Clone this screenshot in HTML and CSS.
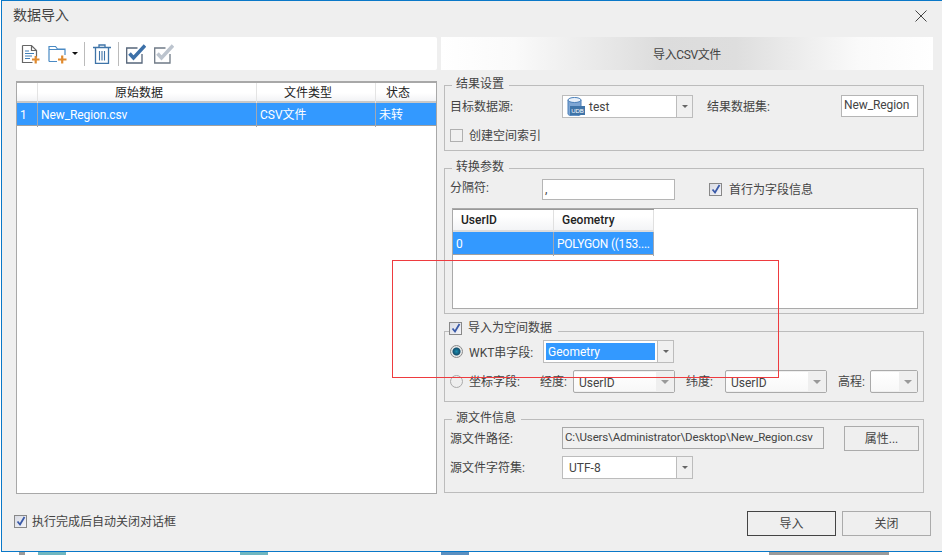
FILE: index.html
```html
<!DOCTYPE html>
<html lang="zh-CN">
<head>
<meta charset="utf-8">
<title>数据导入</title>
<link rel="stylesheet" href="styles.css">
</head>
<body>
<div class="dialog">
  <div class="titlebar">
    <span class="title">数据导入</span>
    <svg class="close" width="12" height="12" viewBox="0 0 12 12"><path d="M.5.5l11 11M11.500.5l-11 11" stroke="#444" stroke-width="1" fill="none"/></svg>
  </div>
  <div class="main">
    <div class="left">
      <div class="toolbar">
        <svg class="tool t-doc" width="19" height="20" viewBox="0 0 19 20"><path d="M1.500 1.500h9l5 5v7M15.500 6.500h-5v-5M1.500 1.500v17h10" fill="none" stroke="#666" stroke-width="1.200"/><path d="M4 7h4M4 9.500h9M4 12h7M4 14.500h5" stroke="#3f7fb8" stroke-width="1"/><path d="M11 15.500h7.500M14.700 12v7.500" stroke="#e08a2e" stroke-width="2.200"/></svg>
        <svg class="tool t-folder" width="20" height="20" viewBox="0 0 20 20"><path d="M1 17.500V2.500h6.500l2 2.500h7.500v6M1 5.500h16M1 17.500h8" fill="none" stroke="#4a8ac4" stroke-width="1.200"/><path d="M10 15.500h8.500M14.200 11.500v8" stroke="#e08a2e" stroke-width="2.200"/></svg>
        <span class="tool-arrow"></span>
        <span class="tool-sep"></span>
        <svg class="tool t-trash" width="18" height="20" viewBox="0 0 18 20"><path d="M0 3.500h18M6 3V1h6v2" fill="none" stroke="#3f74a8" stroke-width="1.300"/><path d="M2.500 4v15.300h13V4" fill="none" stroke="#3f74a8" stroke-width="1.300"/><path d="M6.500 7v9.500M9 7v9.500M11.500 7v9.500" stroke="#3f74a8" stroke-width="1.100"/></svg>
        <span class="tool-sep sep-2"></span>
        <svg class="tool t-check" width="20" height="20" viewBox="0 0 20 20"><path d="M16 10v9H.7V4h10.800" fill="none" stroke="#55657a" stroke-width="1.300"/><path d="M3.500 9.500l4 4.500L19 1.500" fill="none" stroke="#3c70a8" stroke-width="3.500"/></svg>
        <svg class="tool t-uncheck" width="20" height="20" viewBox="0 0 20 20"><path d="M16 10v9H.7V4h10.800" fill="none" stroke="#6f7a86" stroke-width="1.300"/><path d="M3.500 9.500l4 4.500L19 1.500" fill="none" stroke="#bcc4ce" stroke-width="3.500"/></svg>
      </div>
      <div class="file-table">
        <div class="ft-row ft-head">
          <div class="ft-cell"></div>
          <div class="ft-cell">原始数据</div>
          <div class="ft-cell">文件类型</div>
          <div class="ft-cell">状态</div>
        </div>
        <div class="ft-row ft-sel">
          <div class="ft-cell">1</div>
          <div class="ft-cell ft-name">New_Region.csv</div>
          <div class="ft-cell">CSV文件</div>
          <div class="ft-cell">未转</div>
        </div>
      </div>
    </div>
    <div class="right">
      <div class="panel-head">导入CSV文件</div>

      <div class="group g-result">
        <div class="legend">结果设置</div>
        <div class="row r-result-1">
          <span class="lbl w-112">目标数据源:</span>
          <div class="combo w-131">
            <div class="combo-val">
              <svg class="db" width="18" height="19" viewBox="0 0 18 19"><path d="M1 3v14c0 1 3 2 6.500 2s6.500-1 6.500-2V3" fill="#7ea6d4" stroke="#4a7fb8"/><ellipse cx="7.500" cy="3" rx="6.500" ry="2.500" fill="#e8f0fa" stroke="#4a7fb8"/><rect x="3" y="9" width="15" height="9" fill="#3f74a8"/><text x="10.500" y="16" font-size="6" font-family="Liberation Sans, sans-serif" fill="#fff" text-anchor="middle">UDB</text></svg>
              <span>test</span>
            </div>
            <span class="combo-btn"><i></i></span>
          </div>
          <span class="lbl w-134">结果数据集:</span>
          <div class="input w-77 in-result">New_Region</div>
        </div>
        <div class="row r-result-2">
          <span class="check"></span>
          <span class="lbl">创建空间索引</span>
        </div>
      </div>

      <div class="group g-convert">
        <div class="legend">转换参数</div>
        <div class="row r-conv-1">
          <span class="lbl w-92 lbl-up">分隔符:</span>
          <div class="input w-133 in-sep">,</div>
          <span class="check on"><svg width="12" height="12" viewBox="0 0 12 12"><path d="M2.500 6.500l2.500 3L9.500 2" fill="none" stroke="#3a5aa8" stroke-width="1.800"/></svg></span>
          <span class="lbl">首行为字段信息</span>
        </div>
        <div class="preview">
          <div class="pv-table">
            <div class="pv-row pv-head"><div class="pv-cell">UserID</div><div class="pv-cell">Geometry</div></div>
            <div class="pv-row pv-sel"><div class="pv-cell">0</div><div class="pv-cell">POLYGON ((153....</div></div>
          </div>
        </div>
      </div>

      <div class="group g-spatial">
        <div class="legend legend-check">
          <span class="check on"><svg width="12" height="12" viewBox="0 0 12 12"><path d="M2.500 6.500l2.500 3L9.500 2" fill="none" stroke="#3a5aa8" stroke-width="1.800"/></svg></span>
          <span>导入为空间数据</span>
        </div>
        <div class="row r-sp-1">
          <span class="radio on"></span>
          <span class="lbl w-74">WKT串字段:</span>
          <div class="combo w-131 combo-sel">
            <div class="combo-val"><span class="selected">Geometry</span></div>
            <span class="combo-btn"><i></i></span>
          </div>
        </div>
        <div class="row r-sp-2">
          <span class="radio"></span>
          <span class="lbl w-71">坐标字段:</span>
          <span class="lbl w-33">经度:</span>
          <div class="combo w-102 combo-off"><div class="combo-val"><span>UserID</span></div><span class="combo-btn"><i></i></span></div>
          <span class="lbl w-39">纬度:</span>
          <div class="combo w-102 combo-off"><div class="combo-val"><span>UserID</span></div><span class="combo-btn"><i></i></span></div>
          <span class="lbl w-32">高程:</span>
          <div class="combo w-48 combo-off"><div class="combo-val"></div><span class="combo-btn"><i></i></span></div>
        </div>
      </div>

      <div class="group g-source">
        <div class="legend">源文件信息</div>
        <div class="row r-src-1">
          <span class="lbl w-112">源文件路径:</span>
          <div class="input w-262 in-path">C:\Users\Administrator\Desktop\New_Region.csv</div>
          <div class="btn btn-prop">属性...</div>
        </div>
        <div class="row r-src-2">
          <span class="lbl w-112">源文件字符集:</span>
          <div class="combo w-131">
            <div class="combo-val pad-6"><span>UTF-8</span></div>
            <span class="combo-btn"><i></i></span>
          </div>
        </div>
      </div>
    </div>
  </div>
  <div class="footer">
    <div class="auto-close">
      <span class="check on"><svg width="12" height="12" viewBox="0 0 12 12"><path d="M2.500 6.500l2.500 3L9.500 2" fill="none" stroke="#3a5aa8" stroke-width="1.800"/></svg></span>
      <span class="lbl">执行完成后自动关闭对话框</span>
    </div>
    <div class="actions">
      <div class="btn btn-main">导入</div>
      <div class="btn btn-close">关闭</div>
    </div>
  </div>
</div>
<div class="desktop">
  <span class="d-mark d1"></span>
  <span class="d-teal d2"></span>
  <span class="d-teal d3"></span>
  <span class="d-blue d4"></span>
  <span class="d-mark d5"></span>
</div>
<div class="annotation"></div>
</body>
</html>
```
FILE: styles.css
```css
* { box-sizing: border-box; }
html, body { margin: 0; padding: 0; }
body {
  position: relative;
  width: 942px;
  height: 555px;
  overflow: hidden;
  background: #fff;
  font-family: Roboto, "Noto Sans CJK SC", sans-serif;
  font-size: 12px;
  color: #444;
}
.dialog {
  width: 941px;
  height: 552px;
  margin-left: 1px;
  background: #efefef;
  border-top: 1px solid #0a78c8;
  border-left: 1px solid #0a78c8;
  border-bottom: 1px solid #0a78c8;
  display: flex;
  flex-direction: column;
}
.titlebar {
  height: 36px;
  flex: none;
  display: flex;
  justify-content: space-between;
  align-items: flex-start;
  padding: 4px 15px 0 11px;
}
.title { font-size: 14px; line-height: 20px; color: #444; }
.close { margin-top: 5px; }
.main {
  display: flex;
  height: 456px;
  flex: none;
  padding-left: 14px;
  gap: 4px;
}
.left { width: 421px; flex: none; display: flex; flex-direction: column; }
.toolbar {
  height: 33px;
  flex: none;
  background: #fff;
  border-radius: 2px;
  display: flex;
  align-items: center;
  padding-left: 5px;
}
.tool { flex: none; display: block; }
.t-folder { margin-left: 8px; }
.tool-arrow {
  width: 0; height: 0;
  margin-left: 4px;
  border-left: 3px solid transparent;
  border-right: 3px solid transparent;
  border-top: 3px solid #111;
}
.tool-sep { width: 1px; height: 24px; background: #bbb; margin-left: 6px; flex: none; }
.t-trash { margin-left: 8px; }
.sep-2 { margin-left: 7px; }
.t-check { margin-left: 7px; }
.t-uncheck { margin-left: 8px; }
.file-table {
  margin-top: 11px;
  height: 413px;
  flex: none;
  background: #fff;
  border: 1px solid #a8a8a8;
  border-top: 2px solid #a8a8a8;
}
.ft-row { display: grid; grid-template-columns: 21px 219px 119px 1fr; }
.ft-head {
  height: 20px;
  background: linear-gradient(#fff 0, #fff 55%, #f2f3f5 100%);
  border-bottom: 2px solid #c8c8c8;
  color: #222;
  text-align: center;
}
.ft-head .ft-cell { border-right: 1px solid #e4e4e4; line-height: 20px; padding-right: 16px; }
.ft-sel {
  height: 23px;
  background: #3399ff;
  color: #fff;
  border-bottom: 1px solid #a0a0a0;
}
.ft-sel .ft-cell { padding-left: 3px; border-right: 1px solid #a0a8b4; line-height: 24px; white-space: nowrap; }
.ft-sel .ft-name { letter-spacing: -.1px; }
.ft-cell:last-child { border-right: 0; }
.right { width: 492px; flex: none; display: flex; flex-direction: column; }
.panel-head {
  height: 33px;
  flex: none;
  background: linear-gradient(90deg, #fff 0, #fafafa 15%, #dcdcdc 45%, #dedede 60%, #fafafa 85%, #fff 100%);
  text-align: center;
  line-height: 37px;
  letter-spacing: -.4px;
}
.group {
  width: 480px;
  margin-left: 3px;
  border: 1px solid #bcbcbc;
  padding: 0 0 0 5px;
  flex: none;
}
.g-result { margin-top: 15px; height: 66px; }
.g-convert { margin-top: 17px; height: 146px; }
.g-spatial { margin-top: 17px; height: 71px; }
.g-source { margin-top: 17px; height: 74px; }
.legend {
  width: fit-content;
  height: 16px;
  margin: -10px 0 0 2px;
  padding: 0 5px 0 4px;
  background: #efefef;
  line-height: 16px;
  white-space: nowrap;
}
.legend-check {
  display: flex;
  align-items: center;
  gap: 6px;
  margin: -12px 0 2px -1px;
  padding: 0 6px 0 0;
}
.row { display: flex; align-items: center; }
.lbl { flex: none; white-space: nowrap; margin-top: -2px; }
.lbl-up { align-self: flex-start; margin-top: -1px; }
.w-112 { width: 112px; }
.w-134 { width: 134px; margin-left: 14px; }
.w-92 { width: 92px; }
.w-74 { width: 74px; margin-top: 0; }
.w-71 { width: 71px; }
.w-33 { width: 33px; }
.w-39 { width: 39px; margin-left: 11px; }
.w-32 { width: 32px; margin-left: 11px; }
.w-131 { width: 131px; }
.w-102 { width: 102px; }
.w-48 { width: 48px; }
.w-77 { width: 77px; }
.w-133 { width: 133px; }
.w-262 { width: 262px; }
.r-result-1 { height: 23px; margin-top: 3px; }
.r-result-2 { height: 16px; margin-top: 9px; gap: 6px; }
.r-conv-1 { height: 21px; margin-top: 4px; }
.r-conv-1 .check { margin-left: 34px; margin-right: 7px; margin-top: -1px; }
.r-sp-1 { height: 23px; margin-top: 4px; gap: 0; }
.r-sp-2 { height: 23px; margin-top: 7px; }
.r-sp-2 .lbl { margin-top: -3px; }
.r-src-1 { height: 25px; margin-top: 0; }
.r-src-2 { height: 23px; margin-top: 5px; }
.radio {
  flex: none;
  width: 13px;
  height: 13px;
  margin-right: 6px;
  border: 1px solid #aaa;
  border-radius: 50%;
  background: #eee;
}
.radio.on {
  border-color: #8a8a8a;
  background: radial-gradient(circle at 50% 50%, #1c8fb0 0, #14506e 3.500px, #e8e8e8 4.500px);
}
.check {
  flex: none;
  width: 13px;
  height: 13px;
  border: 1px solid #b0b0b0;
  background: #f0f0f0;
  display: flex;
  align-items: center;
  justify-content: center;
}
.check.on { border-color: #888; background: linear-gradient(135deg, #d8dbe4, #f4f4f8); }
.check svg { display: block; flex: none; }
.input {
  flex: none;
  background: #fff;
  border: 1px solid #b5b5b5;
  white-space: nowrap;
  overflow: hidden;
}
.in-result { height: 22px; line-height: 18px; padding-left: 2px; align-self: flex-start; letter-spacing: -.1px; }
.in-sep { height: 21px; padding-left: 2px; line-height: 19px; }
.in-path {
  height: 22px;
  line-height: 18px;
  padding-left: 2px;
  background: #f0f0f0;
  border-color: #a8a8a8;
  align-self: flex-start;
  margin-top: 1px;
  font-size: 11.500px;
  letter-spacing: -.15px;
}
.combo {
  flex: none;
  height: 23px;
  display: flex;
  background: #fff;
  border: 1px solid #bcbcbc;
}
.combo-val {
  flex: 1;
  min-width: 0;
  display: flex;
  align-items: center;
  gap: 4px;
  padding-left: 4px;
  white-space: nowrap;
}
.pad-6 { padding-left: 6px; }
.db { flex: none; }
.combo-btn {
  width: 16px;
  flex: none;
  border-left: 1px solid #bcbcbc;
  background: #f0f0f0;
  display: flex;
  align-items: center;
  justify-content: center;
}
.combo-btn i {
  display: block;
  width: 0; height: 0;
  border-left: 3px solid transparent;
  border-right: 3px solid transparent;
  border-top: 3px solid #666;
}
.combo-sel .combo-val { padding: 2px; }
.selected {
  flex: 1;
  align-self: stretch;
  background: #3399ff;
  color: #fff;
  line-height: 15px;
  padding: 2px 0 0 2px;
}
.combo-off { border-color: #aaa; border-radius: 2px; background: #efefef; }
.combo-off .combo-val { background: linear-gradient(#fff, #f8f8f8); padding: 2px 0 0 5px; margin: 1px 0; }
.combo-off .combo-btn { border-left: 0; background: #efefef; width: 18px; }
.combo-off .combo-btn i { border-top-color: #999; border-left-width: 4px; border-right-width: 4px; border-top-width: 4px; }
.preview {
  margin-top: 8px;
  margin-left: 2px;
  width: 466px;
  height: 101px;
  background: #fff;
  border: 1px solid #aaa;
}
.pv-table { width: 201px; }
.pv-row { display: grid; grid-template-columns: 101px 100px; }
.pv-head {
  height: 23px;
  background: linear-gradient(#fff 0, #fff 30%, #f3f4f6 100%);
  border-top: 1px solid #999;
  border-bottom: 2px solid #dcdcdc;
  color: #222;
  font-weight: 500;
}
.pv-head .pv-cell { padding-left: 8px; line-height: 21px; border-right: 1px solid #e0e0e0; }
.pv-sel { height: 23px; background: #3399ff; color: #fff; border-bottom: 1px solid #a0a0a0; }
.pv-sel .pv-cell { padding-left: 3px; line-height: 24px; border-right: 1px solid #a0a8b4; white-space: nowrap; letter-spacing: -.25px; }
.btn {
  flex: none;
  background: #efefef;
  border: 1px solid #ababab;
  text-align: center;
}
.btn-prop { width: 75px; height: 25px; margin-left: 20px; line-height: 24px; }
.footer {
  flex: 1;
  display: flex;
  justify-content: space-between;
  padding: 18px 11px 0 12px;
}
.auto-close { display: flex; align-items: center; gap: 5px; height: 18px; margin-top: 1px; }
.actions { display: flex; gap: 6px; }
.btn-main, .btn-close { height: 25px; line-height: 24px; }
.btn-main { width: 89px; border-color: #444; }
.btn-close { width: 89px; }
.desktop { display: flex; height: 3px; background: #fff; }
.d-mark, .d-teal, .d-blue { display: block; height: 3px; flex: none; }
.d-mark { background: #9a9a9a; }
.d-teal { background: #6fb6c0; }
.d-blue { background: #5a8fc0; }
.d1 { width: 6px; margin-left: 19px; }
.d2 { width: 28px; margin-left: 13px; }
.d3 { width: 28px; margin-left: 174px; }
.d4 { width: 28px; margin-left: 173px; }
.d5 { width: 120px; margin-left: 300px; }
.annotation {
  position: absolute;
  left: 392px;
  top: 260px;
  width: 387px;
  height: 118px;
  border: 1px solid #ee3b3f;
  pointer-events: none;
}
```
